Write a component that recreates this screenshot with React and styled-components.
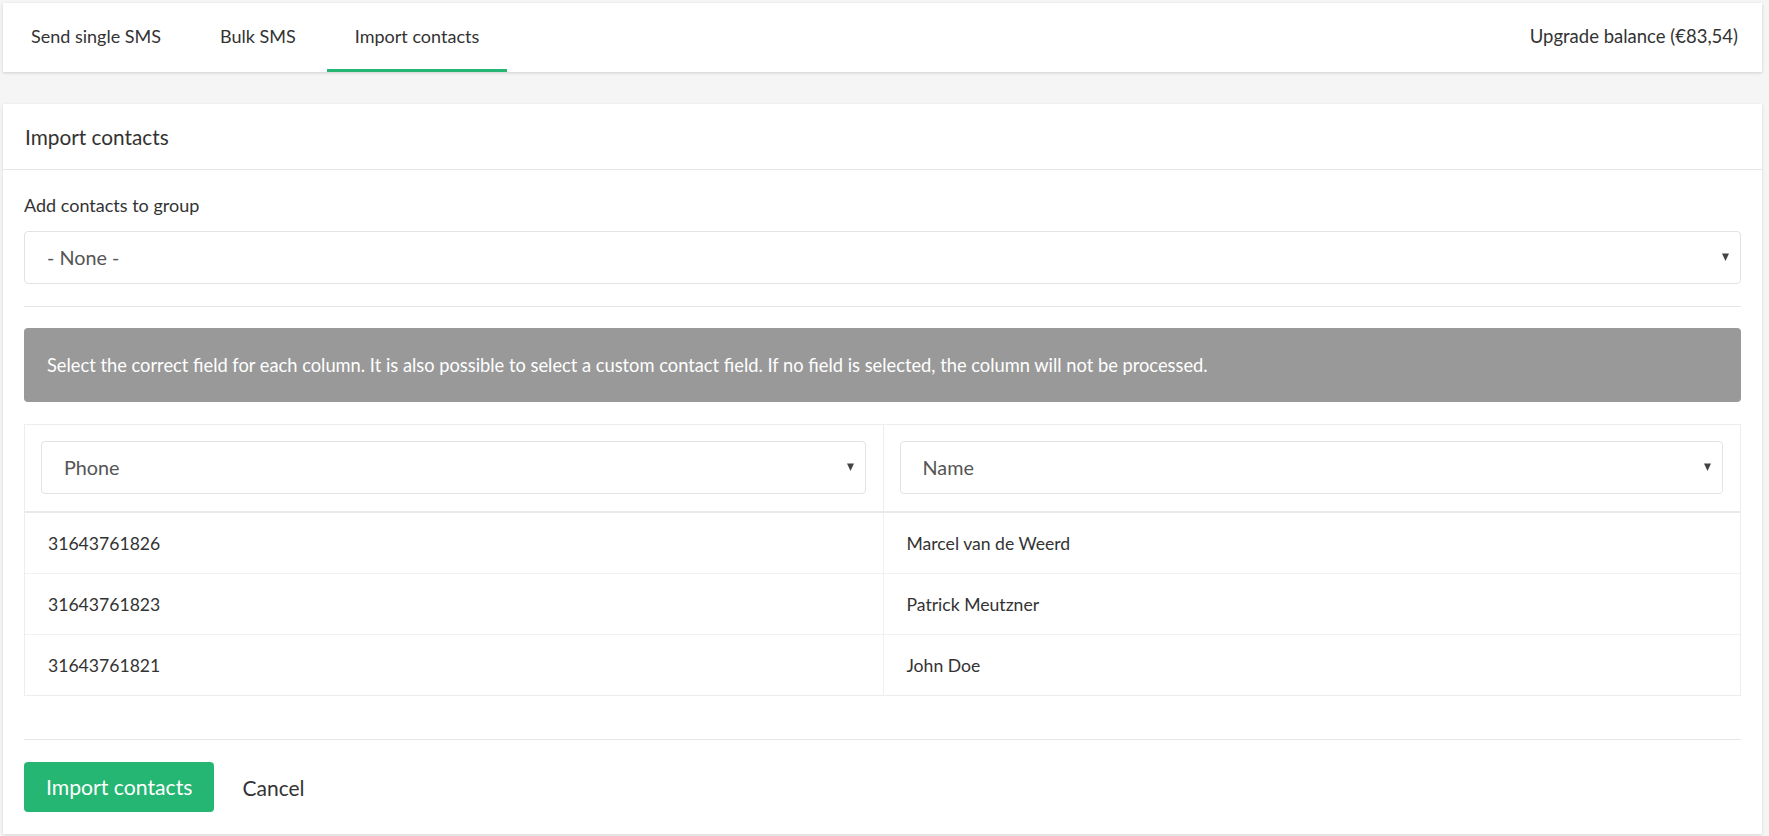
import React from 'react';
import styled, { createGlobalStyle } from 'styled-components';

const GlobalStyle = createGlobalStyle`
  *, *::before, *::after { box-sizing: border-box; }
  html, body {
    margin: 0;
    padding: 0;
    background: #f5f5f5;
    height: 100%;
    overflow: hidden;
  }
  body {
    font-family: Lato, "Liberation Sans", Arial, sans-serif;
    color: #333;
    -webkit-font-smoothing: antialiased;
  }
`;

const Page = styled.div`
  display: flex;
  flex-direction: column;
  gap: 32px;
  padding: 3px 7px 2px 3px;
`;

const TopBar = styled.nav`
  height: 69px;
  display: flex;
  justify-content: space-between;
  align-items: stretch;
  background: #fff;
  box-shadow: 0 1px 3px rgba(0, 0, 0, 0.16);
`;

const Tabs = styled.div`
  display: flex;
  gap: 3px;
`;

const Tab = styled.a`
  display: flex;
  align-items: center;
  padding: 0 28px;
  font-size: 18px;
  color: #333;
  text-decoration: none;
  cursor: pointer;
  border-bottom: 3px solid ${(p) => (p.$active ? '#24b672' : 'transparent')};
`;

const BalanceLink = styled.a`
  display: flex;
  align-items: center;
  padding: 0 24px 3px 24px;
  font-size: 18.5px;
  color: #333;
  text-decoration: none;
  cursor: pointer;
`;

const Card = styled.section`
  background: #fff;
  box-shadow: 0 1px 3px rgba(0, 0, 0, 0.13);
`;

const CardHeader = styled.header`
  height: 66px;
  display: flex;
  align-items: center;
  padding-left: 22px;
  border-bottom: 1px solid #e6e6e6;
  font-size: 20.8px;
  color: #333;
`;

const CardBody = styled.div`
  padding: 23px 21px 22px 21px;
`;

const Label = styled.label`
  display: block;
  font-size: 18px;
  line-height: 24px;
  margin-bottom: 14px;
  color: #333;
`;

const SelectBox = styled.div`
  height: 53px;
  display: flex;
  align-items: center;
  justify-content: space-between;
  padding: 0 11px 1px 22px;
  border: 1px solid #e3e3e3;
  border-radius: 4px;
  background: #fff;
  font-size: 19.8px;
  color: #555;
  cursor: pointer;
`;

const Divider = styled.hr`
  border: 0;
  border-top: 1px solid #e6e6e6;
  margin: ${(p) => p.$margin || '22px 0 21px'};
`;

const InfoBox = styled.div`
  height: 74px;
  display: flex;
  align-items: center;
  padding: 0 23px;
  margin-bottom: 22px;
  background: #999;
  border-radius: 4px;
  color: #fff;
  font-size: 18.3px;
`;

const Table = styled.div`
  border: 1px solid #ededed;
`;

const HeadRow = styled.div`
  display: grid;
  grid-template-columns: 1fr 1fr;
  border-bottom: 2px solid #e9e9e9;
`;

const HeadCell = styled.div`
  padding: 16px 17px 17px 16px;
  border-left: ${(p) => (p.$first ? '0' : '1px solid #ededed')};
`;

const Row = styled.div`
  display: grid;
  grid-template-columns: 1fr 1fr;
  border-bottom: ${(p) => (p.$last ? '0' : '1px solid #f2f2f2')};
`;

const Cell = styled.div`
  height: 60px;
  display: flex;
  align-items: center;
  padding-left: 23px;
  font-size: 17.6px;
  color: #333;
  border-left: ${(p) => (p.$first ? '0' : '1px solid #f0f0f0')};
`;

const Actions = styled.div`
  display: flex;
  align-items: center;
  gap: 28px;
`;

const PrimaryButton = styled.button`
  height: 50px;
  padding: 0 22px;
  border: 0;
  border-radius: 4px;
  background: #24b672;
  color: #fff;
  font-family: inherit;
  font-size: 21.2px;
  cursor: pointer;
`;

const TextButton = styled.button`
  padding: 0;
  border: 0;
  background: none;
  color: #333;
  font-family: inherit;
  font-size: 21px;
  cursor: pointer;
`;

const Caret = () => (
  <svg width="7" height="8" viewBox="0 0 7 8" aria-hidden="true">
    <polygon points="0,0.5 7,0.5 3.5,8" fill="#444" />
  </svg>
);

const Select = ({ value }) => (
  <SelectBox>
    <span>{value}</span>
    <Caret />
  </SelectBox>
);

const rows = [
  ['31643761826', 'Marcel van de Weerd'],
  ['31643761823', 'Patrick Meutzner'],
  ['31643761821', 'John Doe'],
];

export default function App() {
  return (
    <>
      <GlobalStyle />
      <Page>
        <TopBar>
          <Tabs>
            <Tab>Send single SMS</Tab>
            <Tab>Bulk SMS</Tab>
            <Tab $active>Import contacts</Tab>
          </Tabs>
          <BalanceLink>Upgrade balance (€83,54)</BalanceLink>
        </TopBar>

        <Card>
          <CardHeader>Import contacts</CardHeader>
          <CardBody>
            <Label>Add contacts to group</Label>
            <Select value="- None -" />
            <Divider />
            <InfoBox>
              Select the correct field for each column. It is also possible to select a custom contact field. If no field is selected, the column will not be processed.
            </InfoBox>
            <Table>
              <HeadRow>
                <HeadCell $first>
                  <Select value="Phone" />
                </HeadCell>
                <HeadCell>
                  <Select value="Name" />
                </HeadCell>
              </HeadRow>
              {rows.map(([phone, name], i) => (
                <Row key={phone} $last={i === rows.length - 1}>
                  <Cell $first>{phone}</Cell>
                  <Cell>{name}</Cell>
                </Row>
              ))}
            </Table>
            <Divider $margin="43px 0 22px" />
            <Actions>
              <PrimaryButton>Import contacts</PrimaryButton>
              <TextButton>Cancel</TextButton>
            </Actions>
          </CardBody>
        </Card>
      </Page>
    </>
  );
}
